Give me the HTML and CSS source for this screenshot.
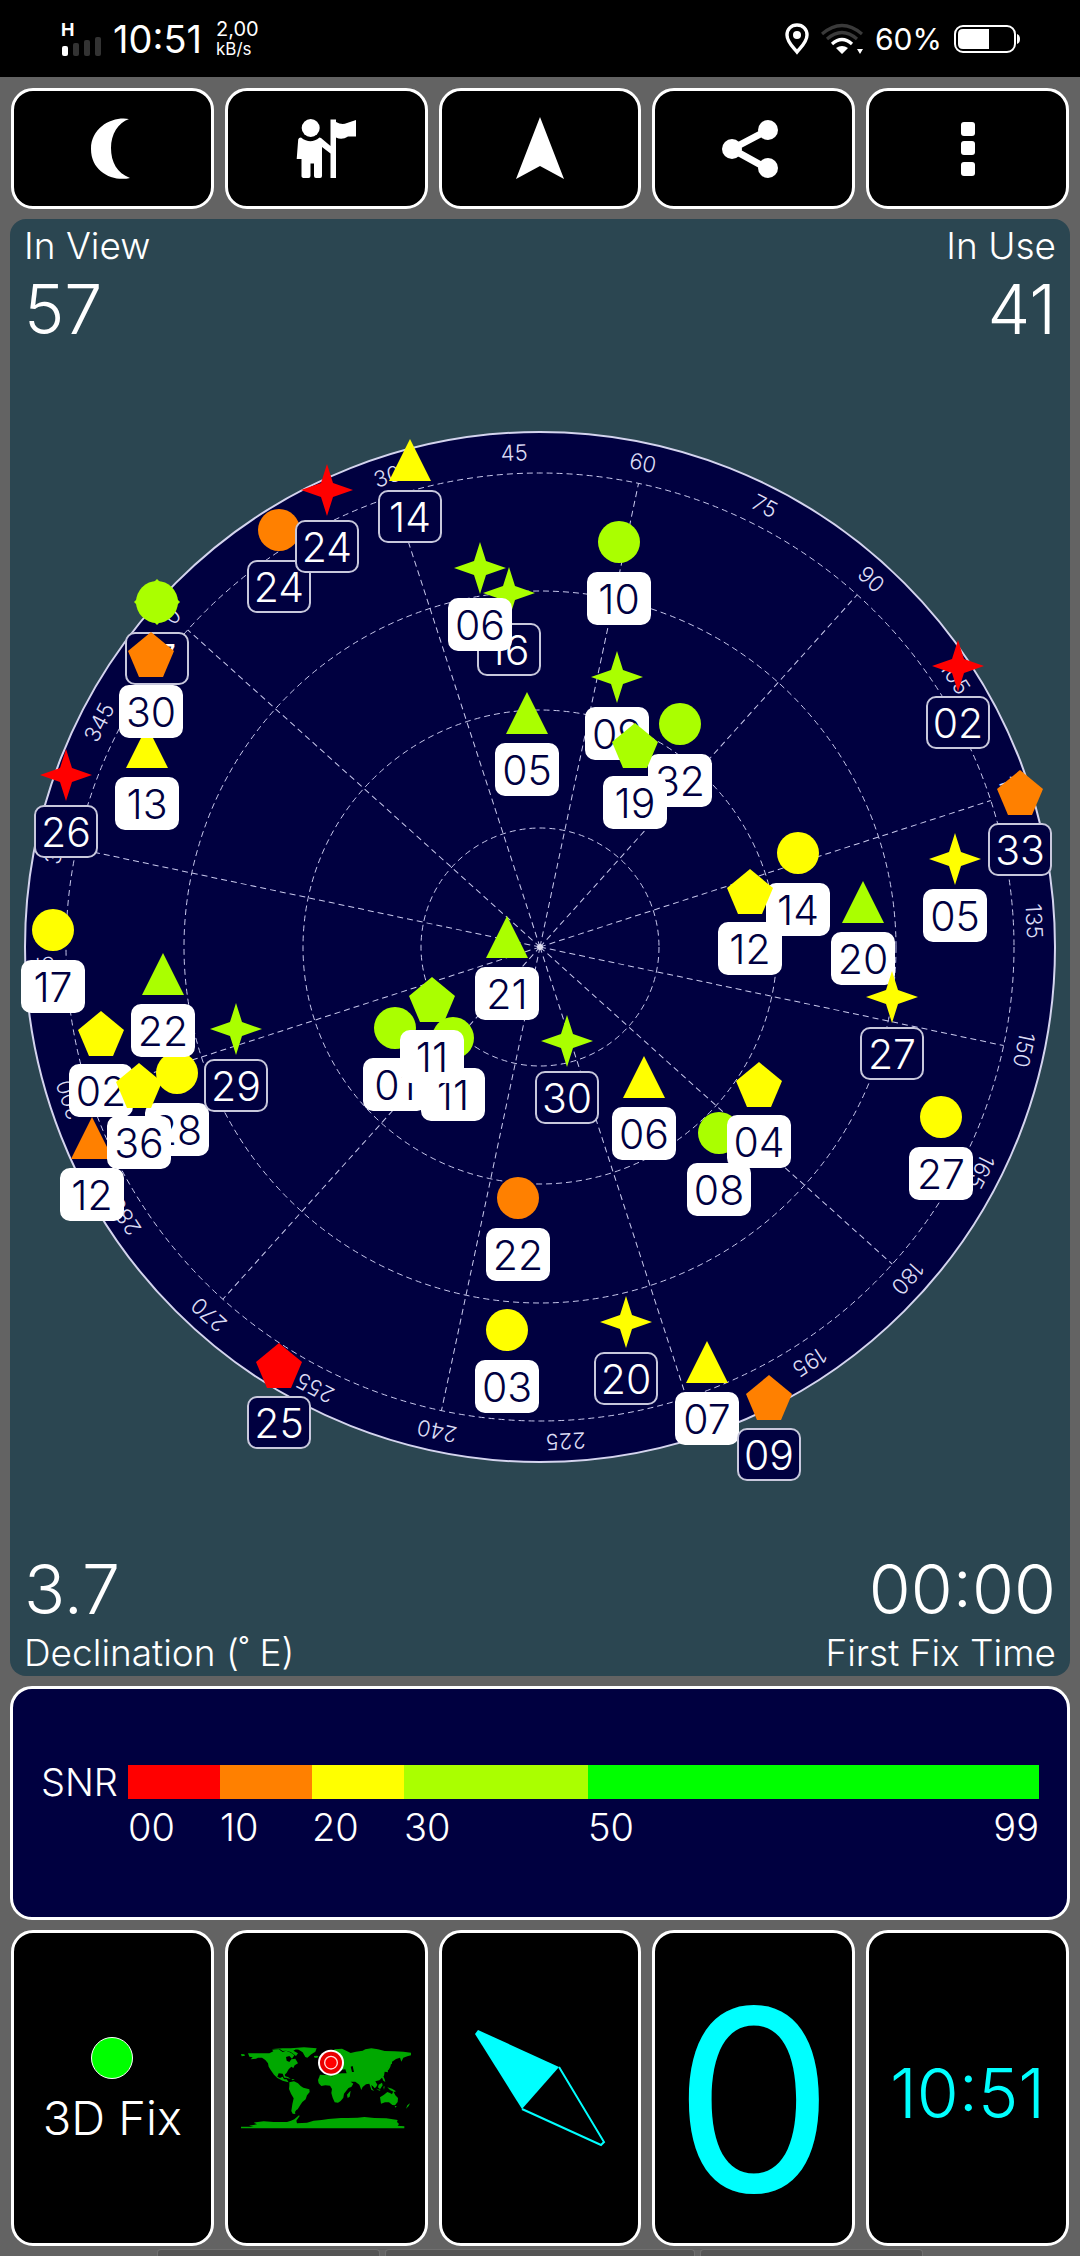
FILE: index.html
```html
<!DOCTYPE html>
<html lang="en">
<head>
<meta charset="utf-8">
<meta name="viewport" content="width=device-width, initial-scale=1">
<title>GPS Status</title>
<link rel="stylesheet" href="styles.css">
</head>
<body>
<header class="status">
  <svg class="signal" viewBox="0 0 42 36" aria-hidden="true">
    <text class="signal-type" x="1" y="15">H</text>
    <rect x="2" y="25" width="6" height="10" rx="2" fill="#fff"/>
    <rect x="13" y="22" width="6" height="13" rx="2" fill="#333"/>
    <rect x="24" y="19" width="6" height="16" rx="2" fill="#333"/>
    <rect x="35" y="16" width="6" height="19" rx="2" fill="#333"/>
  </svg>
  <time class="status-time">10:51</time>
  <div class="net"><span class="net-rate">2,00</span><span class="net-unit">kB/s</span></div>
  <div class="status-right">
    <svg class="pin" viewBox="0 0 24 32" aria-hidden="true"><path d="M12 2C6 2 2 6.500 2 12c0 7 6 12 10 17 4-5 10-10 10-17C22 6.500 18 2 12 2z" fill="none" stroke="#fff" stroke-width="3.400"/><circle cx="12" cy="12" r="4" fill="#fff"/></svg>
    <svg class="wifi" viewBox="0 0 42 32" aria-hidden="true"><g fill="none" stroke-width="3.200"><path d="M1 11Q21-6 41 11M6 16Q21 3 36 16" stroke="#3a3a3a"/><path d="M11 21Q21 12 31 21" stroke="#fff"/></g><path d="M21 31l-6-6q6-4 12 0zM36 26h6l-3 5z" fill="#fff"/></svg>
    <span class="percent">60%</span>
    <svg class="battery" viewBox="0 0 66 28" aria-hidden="true"><rect x="1" y="1" width="60" height="26" rx="8" fill="none" stroke="#fff" stroke-width="2"/><path d="M9 4h26v20H9q-5 0-5-5V9q0-5 5-5z" fill="#fff"/><path d="M63 9q3 1 3 5t-3 5z" fill="#fff"/></svg>
  </div>
</header>

<main class="app">
  <nav class="toolbar">
    <button class="tile tool" type="button" aria-label="Night mode"><svg class="icon" viewBox="0 0 64 64"><path d="M49 2C34-1 11 9 11 32s22 33 39 29C37 56 31 45 31 31S38 6 49 2z" fill="#fff"/></svg></button>
    <button class="tile tool" type="button" aria-label="Waypoint"><svg class="icon" viewBox="0 0 64 64" fill="#fff"><circle cx="16.700" cy="11" r="9"/><path d="M7 20.500Q16.500 28 25.500 20.500L27 21l9.500 8V2.500h5.500V61h-5.500V36.500L28 30v29q0 2-2 2h-4q-2 0-2-2V46.500h-3.500V59q0 2-2 2h-4q-3 0-3-2V42H2.700l1.500-19.500q.3-2 2.800-2z"/><path d="M42 5q6 3.500 11 1l9-3v16.500h-8q-6 4-12 1z"/></svg></button>
    <button class="tile tool" type="button" aria-label="Navigate"><svg class="icon" viewBox="0 0 64 64"><path d="M32 0l24 62-24-13L8 62z" fill="#fff"/></svg></button>
    <button class="tile tool" type="button" aria-label="Share"><svg class="icon" viewBox="0 0 64 64"><path d="M46 13L10 32l36 20" fill="none" stroke="#fff" stroke-width="7"/><g fill="#fff"><circle cx="46" cy="13" r="10"/><circle cx="10" cy="32" r="10"/><circle cx="46" cy="51" r="10"/></g></svg></button>
    <button class="tile tool" type="button" aria-label="More"><svg class="icon" viewBox="0 0 64 64" fill="#fff"><rect x="25" y="5" width="14" height="14" rx="3"/><rect x="25" y="24" width="14" height="14" rx="3"/><rect x="25" y="45" width="14" height="14" rx="3"/></svg></button>
  </nav>

  <section class="sky">
    <div class="readouts">
      <div class="readout"><span class="caption">In View</span><span class="value">57</span></div>
      <div class="readout end"><span class="caption">In Use</span><span class="value">41</span></div>
    </div>
    <svg class="plot" viewBox="10 349 1060 1200" role="img" aria-label="Satellite sky plot">
      <defs>
        <circle id="dot" r="21"/>
        <path id="tri" d="M0-21L21 21h-42z"/>
        <path id="star" d="M0-26L6-7 26 0 6 7 0 26-6 7-26 0-6-7z"/>
        <path id="pent" d="M0-23L23-4 12 22h-24L-23-4z"/>
        <rect id="tag" x="-31" y="31" width="62" height="51" rx="9"/>
      </defs>
      <circle class="dial" cx="540" cy="947" r="515"/>
      <g class="grid">
        <circle cx="540" cy="947" r="119"/><circle cx="540" cy="947" r="237"/><circle cx="540" cy="947" r="356"/><circle cx="540" cy="947" r="474"/>
        <g transform="translate(540 947)">
          <path d="M0 0V-474" transform="rotate(-48)"/><path d="M0 0V-474" transform="rotate(-18)"/><path d="M0 0V-474" transform="rotate(12)"/><path d="M0 0V-474" transform="rotate(42)"/>
          <path d="M0 0V-474" transform="rotate(72)"/><path d="M0 0V-474" transform="rotate(102)"/><path d="M0 0V-474" transform="rotate(132)"/><path d="M0 0V-474" transform="rotate(162)"/>
          <path d="M0 0V-474" transform="rotate(192)"/><path d="M0 0V-474" transform="rotate(222)"/><path d="M0 0V-474" transform="rotate(252)"/><path d="M0 0V-474" transform="rotate(282)"/>
        </g>
      </g>
      <circle cx="540" cy="947" r="3" fill="#dde"/>
      <g class="azimuth" transform="translate(540 947)">
        <text y="-487" transform="rotate(-48)">0</text><text y="-487" transform="rotate(-33)">15</text><text y="-487" transform="rotate(-18)">30</text><text y="-487" transform="rotate(-3)">45</text>
        <text y="-487" transform="rotate(12)">60</text><text y="-487" transform="rotate(27)">75</text><text y="-487" transform="rotate(42)">90</text><text y="-487" transform="rotate(57)">105</text>
        <text y="-487" transform="rotate(72)">120</text><text y="-487" transform="rotate(87)">135</text><text y="-487" transform="rotate(102)">150</text><text y="-487" transform="rotate(117)">165</text>
        <text y="-487" transform="rotate(132)">180</text><text y="-487" transform="rotate(147)">195</text><text y="-487" transform="rotate(162)">210</text><text y="-487" transform="rotate(177)">225</text>
        <text y="-487" transform="rotate(192)">240</text><text y="-487" transform="rotate(207)">255</text><text y="-487" transform="rotate(222)">270</text><text y="-487" transform="rotate(237)">285</text>
        <text y="-487" transform="rotate(252)">300</text><text y="-487" transform="rotate(267)">315</text><text y="-487" transform="rotate(282)">330</text><text y="-487" transform="rotate(297)">345</text>
      </g>
      <g class="sats">
        <g class="seen yellow" transform="translate(410 460)"><use href="#tri"/><use class="tag" href="#tag"/><text y="72">14</text></g>
        <g class="seen orange" transform="translate(279 530)"><use href="#dot"/><use class="tag" href="#tag"/><text y="72">24</text></g>
        <g class="seen red" transform="translate(327 490)"><use href="#star"/><use class="tag" href="#tag"/><text y="72">24</text></g>
        <g class="seen lime" transform="translate(157 602)"><use href="#dot"/><path d="M0-23L23 0 0 23-23 0z"/><use class="tag" href="#tag"/><text y="72">17</text></g>
        <g class="used yellow" transform="translate(147 747)"><use href="#tri"/><use class="tag" href="#tag"/><text y="72">13</text></g>
        <g class="used orange" transform="translate(151 655)"><use href="#pent"/><use class="tag" href="#tag"/><text y="72">30</text></g>
        <g class="seen red" transform="translate(66 775)"><use href="#star"/><use class="tag" href="#tag"/><text y="72">26</text></g>
        <g class="used yellow" transform="translate(53 930)"><use href="#dot"/><use class="tag" href="#tag"/><text y="72">17</text></g>
        <g class="seen lime" transform="translate(509 593)"><use href="#star"/><use class="tag" href="#tag"/><text y="72">16</text></g>
        <g class="used lime" transform="translate(480 568)"><use href="#star"/><use class="tag" href="#tag"/><text y="72">06</text></g>
        <g class="used lime" transform="translate(527 713)"><use href="#tri"/><use class="tag" href="#tag"/><text y="72">05</text></g>
        <g class="used lime" transform="translate(619 542)"><use href="#dot"/><use class="tag" href="#tag"/><text y="72">10</text></g>
        <g class="used lime" transform="translate(617 677)"><use href="#star"/><use class="tag" href="#tag"/><text y="72">09</text></g>
        <g class="used lime" transform="translate(680 724)"><use href="#dot"/><use class="tag" href="#tag"/><text y="72">32</text></g>
        <g class="used lime" transform="translate(635 746)"><use href="#pent"/><use class="tag" href="#tag"/><text y="72">19</text></g>
        <g class="seen red" transform="translate(958 666)"><use href="#star"/><use class="tag" href="#tag"/><text y="72">02</text></g>
        <g class="seen orange" transform="translate(1020 793)"><use href="#pent"/><use class="tag" href="#tag"/><text y="72">33</text></g>
        <g class="used yellow" transform="translate(798 853)"><use href="#dot"/><use class="tag" href="#tag"/><text y="72">14</text></g>
        <g class="used yellow" transform="translate(750 892)"><use href="#pent"/><use class="tag" href="#tag"/><text y="72">12</text></g>
        <g class="used lime" transform="translate(863 902)"><use href="#tri"/><use class="tag" href="#tag"/><text y="72">20</text></g>
        <g class="used yellow" transform="translate(955 859)"><use href="#star"/><use class="tag" href="#tag"/><text y="72">05</text></g>
        <g class="seen yellow" transform="translate(892 997)"><use href="#star"/><use class="tag" href="#tag"/><text y="72">27</text></g>
        <g class="used yellow" transform="translate(941 1117)"><use href="#dot"/><use class="tag" href="#tag"/><text y="72">27</text></g>
        <g class="seen lime" transform="translate(567 1041)"><use href="#star"/><use class="tag" href="#tag"/><text y="72">30</text></g>
        <g class="used yellow" transform="translate(644 1077)"><use href="#tri"/><use class="tag" href="#tag"/><text y="72">06</text></g>
        <g class="used lime" transform="translate(719 1133)"><use href="#dot"/><use class="tag" href="#tag"/><text y="72">08</text></g>
        <g class="used yellow" transform="translate(759 1085)"><use href="#pent"/><use class="tag" href="#tag"/><text y="72">04</text></g>
        <g class="seen yellow" transform="translate(626 1322)"><use href="#star"/><use class="tag" href="#tag"/><text y="72">20</text></g>
        <g class="used yellow" transform="translate(707 1362)"><use href="#tri"/><use class="tag" href="#tag"/><text y="72">07</text></g>
        <g class="seen orange" transform="translate(769 1398)"><use href="#pent"/><use class="tag" href="#tag"/><text y="72">09</text></g>
        <g class="used lime" transform="translate(507 937)"><use href="#tri"/><use class="tag" href="#tag"/><text y="72">21</text></g>
        <g class="used yellow" transform="translate(177 1073)"><use href="#dot"/><use class="tag" href="#tag"/><text y="72">28</text></g>
        <g class="used lime" transform="translate(163 974)"><use href="#tri"/><use class="tag" href="#tag"/><text y="72">22</text></g>
        <g class="seen lime" transform="translate(236 1029)"><use href="#star"/><use class="tag" href="#tag"/><text y="72">29</text></g>
        <g class="used yellow" transform="translate(101 1034)"><use href="#pent"/><use class="tag" href="#tag"/><text y="72">02</text></g>
        <g class="used orange" transform="translate(92 1138)"><use href="#tri"/><use class="tag" href="#tag"/><text y="72">12</text></g>
        <g class="used yellow" transform="translate(139 1086)"><use href="#pent"/><use class="tag" href="#tag"/><text y="72">36</text></g>
        <g class="used lime" transform="translate(395 1028)"><use href="#dot"/><use class="tag" href="#tag"/><text y="72">01</text></g>
        <g class="used lime" transform="translate(453 1038)"><use href="#dot"/><use class="tag" href="#tag"/><text y="72">11</text></g>
        <g class="used lime" transform="translate(432 1000)"><use href="#pent"/><use class="tag" href="#tag"/><text y="72">11</text></g>
        <g class="used orange" transform="translate(518 1198)"><use href="#dot"/><use class="tag" href="#tag"/><text y="72">22</text></g>
        <g class="used yellow" transform="translate(507 1330)"><use href="#dot"/><use class="tag" href="#tag"/><text y="72">03</text></g>
        <g class="seen red" transform="translate(279 1366)"><use href="#pent"/><use class="tag" href="#tag"/><text y="72">25</text></g>
      </g>
    </svg>
    <div class="readouts">
      <div class="readout"><span class="value">3.7</span><span class="caption">Declination (˚ E)</span></div>
      <div class="readout end"><span class="value">00:00</span><span class="caption">First Fix Time</span></div>
    </div>
  </section>

  <section class="tile snr">
    <span class="snr-title">SNR</span>
    <div class="scale">
      <div class="band span-10"><i class="bar red"></i><span>00</span></div>
      <div class="band span-10"><i class="bar orange"></i><span>10</span></div>
      <div class="band span-10"><i class="bar yellow"></i><span>20</span></div>
      <div class="band span-20"><i class="bar lime"></i><span>30</span></div>
      <div class="band span-49"><i class="bar green"></i><span>50</span><span>99</span></div>
    </div>
  </section>

  <section class="gauges">
    <button class="tile gauge fix" type="button"><span class="fix-dot"></span><span class="fix-text">3D Fix</span></button>
    <button class="tile gauge" type="button" aria-label="Location">
      <svg class="map" viewBox="15 24 510 248">
        <g fill="#00a800">
          <path d="M36 44L100 44 112 38 108 33 128 32 140 40 150 36 165 42 175 50 168 60 160 52 150 55 152 66 160 70 166 62 178 60 186 74 176 80 172 88 166 84 158 92 152 102 146 108 150 118 145 117 140 105 128 104 124 114 132 118 140 114 144 122 152 122 158 131 154 130 140 126 124 118 114 108 104 94 98 84 96 74 88 64 78 57 66 57 60 60 44 62 50 56 40 54z"/>
          <path d="M15 46l10 1 2 4-10 2zM110 31l30-2 26 0 14 3-8 4 14 8-6 8-16-12-14-4-10 1-8-5-14 0zM164 29l40-3 38 3-4 10-12 8-12 10-6-2-8-14-12-8zM234 52l10-1 4 4-8 3-6-2zM140 111l16 4 8 6-12-3zM166 121l10 1-6 3z"/>
          <path d="M160 131l14-3 12 6 8 8 8 5 18 5 1 8-8 10-4 12-10 8-8 12-6 10-4 2-4 6 1 6-8-1-4-8 3-20 4-18-8-14-6-14 1-10z"/>
          <path d="M252 108l32 2 4 4 14 2 16-1 4 10 8 14 10 0-2 8-14 18-2 12-8 10-8 5-10-1-6-14-4-14 2-12-6-10-14-1-12 2-8-8-2-10 4-10z"/>
          <path d="M258 92l26-46 12-14 22-2 14 7 12 6 16-4 20-3 8-4 18-3 20 3 20 5 30 1 26 1 26 4 0 6-14 4-12 4-6 12-4-12-12 4-14 10-2 10-10 8 2 12-10-2-2 12-14 14-12 3 6 10-4 8-8-3-6-4 2 10 6 8-8-4-6-18-10 2-10 8-4 9-6-16-12-9-14 0 8 6-6 10-16 5-10-14-10-12-10 0-10-10z"/>
          <path d="M340 160l4-4-3 18-6 4-2-10zM388 129l3 4-3 2zM408 133l12 12-4 4-10-12zM428 138l10-6 2 8-8 12-6-6zM442 144l4-1-2 10zM420 150l14 4-4 2zM454 146l14 4 12 8-6 2-12-6zM436 98l4 10 6 14 2 8-6-4-6-14zM450 92l10-10 4 1-6 10-8 6zM464 66l4-3 0 14-3-2z"/>
          <path d="M432 176l12-8 10-8 8 3 6 4 4-9 6 12 8 8-1 12-8 10-8-1-10-8-12 0-12 4zM476 202l6 0-3 5zM514 200l8-6-4 8-8 8zM330 112l4-6 10 10-6 4z"/>
          <path d="M15 264l38 0-14-3 24-4-10-5 30-4 30 2 40 0 12-4 10-4 14-12 2 2-10 14 2 8 30-2 20-6 24-2 20-3 38-3 20 0 30-1 20-2 30 3 36 1 34 5-2 6 6 6-4 5 20 2 0 6-510 0z"/>
        </g>
        <path d="M296 106l22-2 14 0-4-12-32 4zM344 84l6-2 4 18-6 0z" fill="#000"/>
        <circle cx="285" cy="72" r="39" fill="#fff"/><circle cx="285" cy="72" r="33" fill="#e80000"/><circle cx="285" cy="72" r="19" fill="#f00" stroke="#fdd" stroke-width="4"/>
      </svg>
    </button>
    <button class="tile gauge" type="button" aria-label="Compass">
      <svg class="needle" viewBox="0 0 134 118"><path d="M2 5L5 1 86 38 49 80z" fill="#0ff"/><path d="M86 38l45 75-3 3L49 80" fill="none" stroke="#0ff" stroke-width="2"/></svg>
    </button>
    <button class="tile gauge speed" type="button">0</button>
    <button class="tile gauge clock" type="button">10:51</button>
  </section>
</main>
<footer class="hints"><i></i><i class="wide"></i><i></i></footer>
</body>
</html>
```
FILE: styles.css
```css
* { box-sizing: border-box; }

body {
  margin: 0;
  background: #636363;
  color: #fff;
  font-family: Inter, Roboto, sans-serif;
  font-weight: 300;
}

button {
  font: inherit;
  color: inherit;
  cursor: pointer;
}

svg { display: block; }

/* Status bar */
.status {
  display: flex;
  align-items: center;
  height: 77px;
  padding: 0 60px;
  background: #000;
  font-weight: 400;
}
.signal { width: 42px; height: 36px; overflow: visible; }
.signal-type { fill: #fff; font-size: 18px; font-weight: 700; }
.status-time { margin-left: 11px; font-size: 38px; }
.net {
  display: flex;
  flex-direction: column;
  margin-left: 14px;
  line-height: 20px;
}
.net-rate { font-size: 20px; }
.net-unit { font-size: 17px; }
.status-right {
  display: flex;
  align-items: center;
  gap: 12px;
  margin-left: auto;
}
.pin { width: 24px; height: 32px; }
.wifi { width: 42px; height: 32px; }
.percent { font-size: 30px; }
.battery { width: 66px; height: 28px; }

/* Page frame */
.app {
  display: flex;
  flex-direction: column;
  gap: 10px;
  padding: 11px 10px 3px;
}
.toolbar, .gauges {
  display: grid;
  grid-template-columns: repeat(5, 1fr);
  gap: 11px;
  padding: 0 1px;
}
.tile {
  border: 3px solid #fff;
  border-radius: 22px;
  background: #000;
}
.tool {
  display: grid;
  place-items: center;
  height: 121px;
  padding: 0;
}
.icon { width: 64px; height: 64px; }

/* Sky plot */
.sky {
  padding: 3px 0 0;
  border-radius: 16px;
  background: #2b4651;
}
.readouts {
  display: flex;
  justify-content: space-between;
  padding: 0 14px;
}
.readout { display: flex; flex-direction: column; }
.end { align-items: flex-end; }
.caption { font-size: 37px; line-height: 47px; }
.value { font-size: 68px; line-height: 80px; }
.plot { width: 100%; height: auto; }
.dial { fill: #000040; stroke: #d4d4ee; stroke-width: 2; }
.grid { fill: none; stroke: #c8c8ec; stroke-width: 1; stroke-dasharray: 6 4; }
.azimuth text {
  fill: #dcdcf4;
  font-size: 22px;
  text-anchor: middle;
}
.sats text { font-size: 41px; text-anchor: middle; }
.seen text { fill: #fff; }
.seen .tag { fill: #000040; stroke: #c8c8dc; stroke-width: 2; }
.used text { fill: #000040; }
.used .tag { fill: #fff; stroke: #fff; stroke-width: 2; }
.red { fill: #f00; background: #f00; }
.orange { fill: #ff8000; background: #ff8000; }
.yellow { fill: #ff0; background: #ff0; }
.lime { fill: #af0; background: #af0; }
.green { background: #0f0; }

/* Signal strength scale */
.snr {
  display: flex;
  gap: 10px;
  min-height: 234px;
  padding: 76px 28px 0;
  background: #000040;
  font-size: 38px;
}
.snr-title { line-height: 34px; }
.scale { display: flex; flex: 1; }
.band {
  display: flex;
  flex-wrap: wrap;
  align-content: flex-start;
  justify-content: space-between;
  line-height: 56px;
}
.bar { flex: 0 0 100%; height: 34px; }
.span-10 { flex: 10 0 0; }
.span-20 { flex: 20 0 0; }
.span-49 { flex: 49 0 0; }

/* Bottom gauges */
.gauge {
  display: flex;
  flex-direction: column;
  align-items: center;
  justify-content: center;
  min-height: 316px;
  padding: 0;
}
.fix { padding-top: 18px; }
.fix-dot {
  width: 42px;
  height: 42px;
  border: 1px solid #fff;
  border-radius: 50%;
  background: #0f0;
}
.fix-text { font-size: 47px; line-height: 78px; }
.map { width: 170px; height: 84px; }
.needle { width: 134px; height: 118px; }
.speed {
  padding-top: 24px;
  color: #0ff;
  font-size: 254px;
  font-weight: 400;
  line-height: 280px;
}
.clock { padding-top: 10px; color: #0ff; font-size: 68px; }

.hints {
  display: flex;
  gap: 5px;
  width: 71%;
  height: 7px;
  margin: 0 auto;
}
.hints i {
  flex: 223;
  border: 1px solid #707070;
  border-bottom: 0;
  border-radius: 4px 4px 0 0;
  background: #555;
}
.hints .wide { flex: 310; }
```
